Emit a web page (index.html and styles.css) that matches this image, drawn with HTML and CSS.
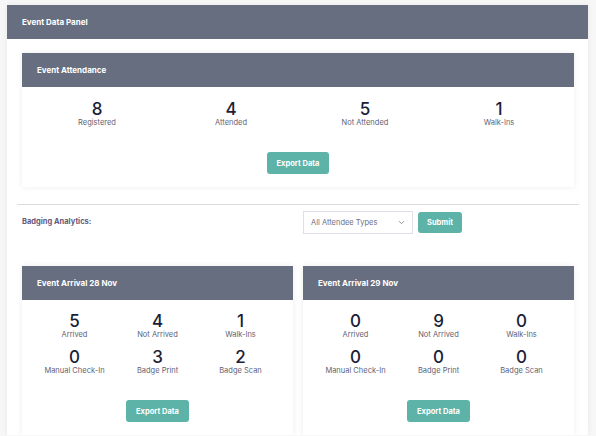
FILE: index.html
```html
<!DOCTYPE html>
<html lang="en">
<head>
  <meta charset="UTF-8">
  <meta name="viewport" content="width=device-width, initial-scale=1.0">
  <title>Event Data Panel</title>
  <link rel="stylesheet" href="styles.css">
</head>
<body>
  <div class="panel">
    <div class="panel-head">Event Data Panel</div>
    <div class="panel-body">

      <!-- 出席 -->
      <div class="card">
        <div class="card-head">Event Attendance</div>
        <div class="card-body">
          <div class="stats stats-4">
            <div class="stat"><div class="num">8</div><div class="label">Registered</div></div>
            <div class="stat"><div class="num">4</div><div class="label">Attended</div></div>
            <div class="stat"><div class="num">5</div><div class="label">Not Attended</div></div>
            <div class="stat"><div class="num">1</div><div class="label">Walk-Ins</div></div>
          </div>
          <div class="actions"><button class="btn">Export Data</button></div>
        </div>
      </div>

      <hr class="divider">

      <div class="filter">
        <div class="filter-label">Badging Analytics:</div>
        <div class="filter-form">
          <div class="select">
            <span>All Attendee Types</span>
            <svg width="7" height="5" viewBox="0 0 7 5"><path d="M1 1.2l2.5 2.5 2.5-2.5" fill="none" stroke="#888" stroke-width="0.9"/></svg>
          </div>
          <button class="btn btn-submit">Submit</button>
        </div>
      </div>

      <div class="days">
        <div class="card">
          <div class="card-head">Event Arrival 28 Nov</div>
          <div class="card-body">
            <div class="stats stats-3">
              <div class="stat"><div class="num">5</div><div class="label">Arrived</div></div>
              <div class="stat"><div class="num">4</div><div class="label">Not Arrived</div></div>
              <div class="stat"><div class="num">1</div><div class="label">Walk-Ins</div></div>
              <div class="stat"><div class="num">0</div><div class="label">Manual Check-In</div></div>
              <div class="stat"><div class="num">3</div><div class="label">Badge Print</div></div>
              <div class="stat"><div class="num">2</div><div class="label">Badge Scan</div></div>
            </div>
            <div class="actions"><button class="btn">Export Data</button></div>
          </div>
        </div>
        <div class="card">
          <div class="card-head">Event Arrival 29 Nov</div>
          <div class="card-body">
            <div class="stats stats-3">
              <div class="stat"><div class="num">0</div><div class="label">Arrived</div></div>
              <div class="stat"><div class="num">9</div><div class="label">Not Arrived</div></div>
              <div class="stat"><div class="num">0</div><div class="label">Walk-Ins</div></div>
              <div class="stat"><div class="num">0</div><div class="label">Manual Check-In</div></div>
              <div class="stat"><div class="num">0</div><div class="label">Badge Print</div></div>
              <div class="stat"><div class="num">0</div><div class="label">Badge Scan</div></div>
            </div>
            <div class="actions"><button class="btn">Export Data</button></div>
          </div>
        </div>
      </div>

    </div>
  </div>
</body>
</html>
```

FILE: styles.css
```css
/* 全局 */
body {
  margin: 0;
  padding: 5px 8px 0 7px;
  background: #f7f7f8;
  font-family: Inter, "Liberation Sans", sans-serif;
  color: #1c2038;
}

/* 外层面板 */
.panel {
  width: 581px;
  background: #fff;
  box-shadow: 0 0 6px rgba(0, 0, 0, .07);
}
.panel-head {
  height: 34px;
  line-height: 34px;
  padding-left: 15px;
  background: #676e80;
  color: #fff;
  font-size: 8px;
  font-weight: 700;
}
.panel-body {
  padding: 14px 14px 0 15px;
}

/* 卡片 */
.card {
  background: #fff;
  box-shadow: 0 0 6px rgba(0, 0, 0, .08);
}
.card-head {
  height: 34px;
  line-height: 34px;
  padding-left: 15px;
  background: #676e80;
  color: #fff;
  font-size: 8px;
  font-weight: 700;
}
.card-body {
  padding: 13px 8px 13px;
}
.stats {
  display: grid;
  text-align: center;
  margin-bottom: 24px;
}
.stats-4 {
  grid-template-columns: repeat(4, 1fr);
}
.stats-3 {
  grid-template-columns: repeat(3, 1fr);
  row-gap: 8px;
  padding: 0 3px;
}
.days .card-body {
  padding-top: 12px;
}
.num {
  font-size: 17px;
  font-weight: 500;
  line-height: 18px;
  color: #1a1e36;
}
.label {
  font-size: 7.5px;
  line-height: 10px;
  color: #5f5f74;
}
.actions {
  display: flex;
  justify-content: center;
}
.btn {
  height: 22px;
  padding: 0 10px;
  border: none;
  border-radius: 3px;
  background: #5db3a7;
  color: #fff;
  font-family: Inter, "Liberation Sans", sans-serif;
  font-size: 7.5px;
  font-weight: 700;
}

/* 筛选 */
.divider {
  margin: 17px -5px 0;
  border: none;
  border-top: 1px solid #dcdcdc;
}
.filter {
  display: grid;
  grid-template-columns: 1fr 1fr;
  column-gap: 10px;
  padding-top: 6px;
}
.filter-label {
  padding-top: 6px;
  font-size: 7.5px;
  font-weight: 700;
  color: #66587a;
}
.filter-form {
  display: flex;
  align-items: center;
  gap: 5px;
}
.select {
  box-sizing: border-box;
  width: 110px;
  height: 23px;
  padding: 0 7px 0 7px;
  border: 1px solid #e1deec;
  display: flex;
  align-items: center;
  justify-content: space-between;
  font-size: 7.5px;
  color: #6e6e86;
}
.btn-submit {
  width: 44px;
  padding: 0;
  height: 21px;
}

/* 日期卡片 */
.days {
  display: grid;
  grid-template-columns: 1fr 1fr;
  column-gap: 10px;
  margin-top: 32px;
}
```
